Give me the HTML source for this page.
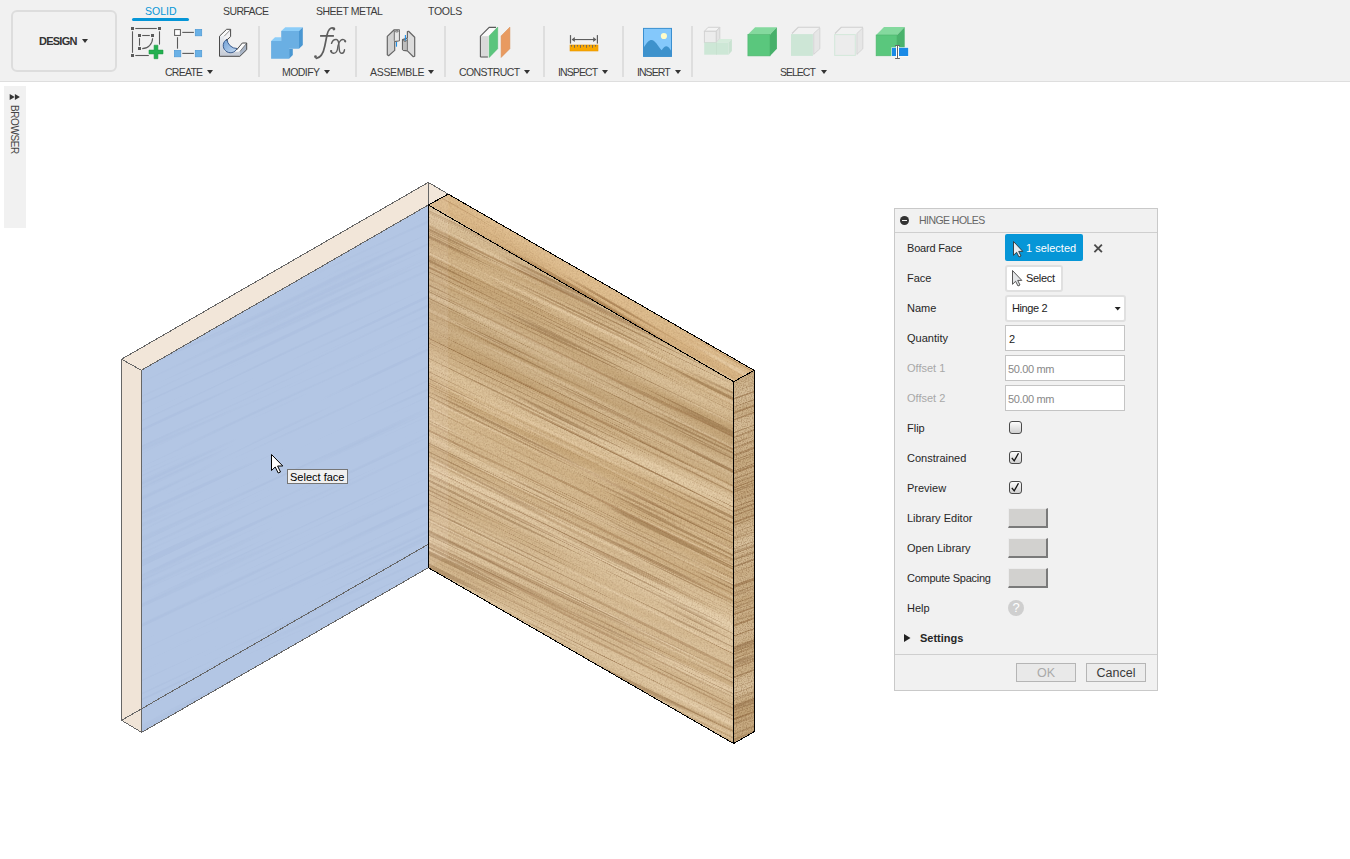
<!DOCTYPE html>
<html><head><meta charset="utf-8">
<style>
html,body{margin:0;padding:0;}
body{width:1350px;height:859px;overflow:hidden;background:#fff;position:relative;font-family:"Liberation Sans",sans-serif;color:#222;}
.abs{position:absolute;}
#tb{left:0;top:0;width:1350px;height:81px;background:#f1f1f1;border-bottom:1px solid #dedede;}
#design{left:11px;top:10px;width:102px;height:58px;border:2px solid #dddddd;border-radius:6px;}
.tab{position:absolute;top:4px;font-size:10.5px;line-height:14px;color:#3c3c3c;white-space:nowrap;letter-spacing:-0.3px;}
.glab{position:absolute;top:65px;font-size:10.5px;line-height:14px;color:#3c3c3c;white-space:nowrap;letter-spacing:-0.3px;}
.tri{position:absolute;width:0;height:0;border-left:3px solid transparent;border-right:3px solid transparent;border-top:4px solid #333;}
.sep{position:absolute;top:26px;width:2px;height:51px;background:#dedede;}
#browser{left:4px;top:86px;width:22px;height:142px;background:#f1f1f1;}
#panel{left:894px;top:208px;width:262px;height:481px;background:#f1f1f1;border:1px solid #c9c9c9;}
.lab{position:absolute;left:12px;font-size:11px;line-height:14px;color:#262626;white-space:nowrap;}
.inp{position:absolute;left:110px;width:118px;height:24px;background:#fff;border:1px solid #c4c4c4;}
.inp span{position:absolute;left:3px;top:6px;font-size:11px;line-height:14px;}
.chk{position:absolute;left:114px;width:11px;height:11px;border:1px solid #4a4a4a;border-radius:3px;background:linear-gradient(#fdfdfd,#cfcfcf);}
.bev{position:absolute;left:113px;width:38px;height:18px;background:#d2d1cf;border-top:1px solid #ececec;border-left:1px solid #ececec;border-right:2px solid #7a7a7a;border-bottom:2px solid #7a7a7a;box-sizing:border-box;width:40px;height:20px;}
</style></head>
<body>
<!-- toolbar -->
<div id="tb" class="abs"></div>
<div id="design" class="abs"></div>
<div class="abs" style="left:39px;top:34px;font-size:11px;font-weight:bold;line-height:14px;color:#333;letter-spacing:-0.76px;">DESIGN</div>
<div class="tri" style="left:82px;top:39px;"></div>

<div class="tab" style="left:145px;color:#0696d7;letter-spacing:0">SOLID</div>
<div class="abs" style="left:132px;top:18px;width:57px;height:3px;background:#0696d7;border-radius:2px;"></div>
<div class="tab" style="left:223px;letter-spacing:-0.6px">SURFACE</div>
<div class="tab" style="left:316px;letter-spacing:-0.5px">SHEET METAL</div>
<div class="tab" style="left:428px;">TOOLS</div>

<div class="glab" style="left:165px;letter-spacing:-0.75px">CREATE</div><div class="tri" style="left:207px;top:70px;"></div>
<div class="glab" style="left:282px;letter-spacing:-0.55px">MODIFY</div><div class="tri" style="left:324px;top:70px;"></div>
<div class="glab" style="left:370px;">ASSEMBLE</div><div class="tri" style="left:428px;top:70px;"></div>
<div class="glab" style="left:459px;letter-spacing:-0.6px">CONSTRUCT</div><div class="tri" style="left:524px;top:70px;"></div>
<div class="glab" style="left:558px;letter-spacing:-0.9px">INSPECT</div><div class="tri" style="left:602px;top:70px;"></div>
<div class="glab" style="left:637px;letter-spacing:-0.95px">INSERT</div><div class="tri" style="left:675px;top:70px;"></div>
<div class="glab" style="left:780px;letter-spacing:-1px">SELECT</div><div class="tri" style="left:821px;top:70px;"></div>

<div class="sep" style="left:258px;"></div>
<div class="sep" style="left:355px;"></div>
<div class="sep" style="left:444px;"></div>
<div class="sep" style="left:543px;"></div>
<div class="sep" style="left:622px;"></div>
<div class="sep" style="left:691px;"></div>

<!-- toolbar icons -->
<svg class="abs" style="left:0;top:0" width="930" height="82" viewBox="0 0 930 82">
  <!-- sketch -->
  <g fill="#5a5a5a">
    <rect x="131" y="27" width="3" height="3"/><rect x="158" y="27" width="3" height="3"/><rect x="131" y="54" width="3" height="3"/>
    <rect x="138" y="34" width="3" height="3"/><rect x="151" y="34" width="3" height="3"/><rect x="138" y="47" width="3" height="3"/>
  </g>
  <g stroke="#5a5a5a" stroke-width="1.1" fill="none">
    <line x1="135.3" y1="28.5" x2="156.8" y2="28.5"/>
    <line x1="132.5" y1="31.3" x2="132.5" y2="52.8"/>
    <line x1="159.5" y1="31.3" x2="159.5" y2="44.6"/>
    <line x1="135.3" y1="55.5" x2="148.8" y2="55.5"/>
    <line x1="142.2" y1="35.5" x2="149.8" y2="35.5"/>
    <line x1="139.5" y1="38.2" x2="139.5" y2="45.7"/>
    <path d="M152.6,38.2 A10.4,10.4 0 0 1 142.2,48.6"/>
  </g>
  <g fill="#22b04f" stroke="#1d9a43" stroke-width="0.6">
    <path d="M154.1,45.2 H157.9 V50.1 H163 V53.9 H157.9 V58.7 H154.1 V53.9 H149 V50.1 H154.1 Z"/>
  </g>
  <!-- rectangle -->
  <rect x="174.6" y="29.6" width="5.8" height="5.8" fill="#fff" stroke="#5a5a5a" stroke-width="1"/>
  <g fill="#6ab1e6" stroke="#4d9ad6" stroke-width="0.7">
    <rect x="195.3" y="29.4" width="6.4" height="6.4"/>
    <rect x="174.4" y="50.4" width="6.4" height="6.4"/>
    <rect x="195.3" y="50.4" width="6.4" height="6.4"/>
  </g>
  <g stroke="#5a5a5a" stroke-width="1.1">
    <line x1="182.3" y1="32.4" x2="193.9" y2="32.4"/>
    <line x1="177.5" y1="37.2" x2="177.5" y2="48.7"/>
    <line x1="182.3" y1="53.4" x2="193.9" y2="53.4"/>
  </g>
  <!-- fillet -->
  <defs>
    <linearGradient id="gfl" x1="0" y1="0" x2="0" y2="1"><stop offset="0" stop-color="#e9ecf1"/><stop offset="1" stop-color="#c4cad5"/></linearGradient>
    <linearGradient id="gbl" x1="0" y1="0" x2="1" y2="1"><stop offset="0" stop-color="#6f9fd6"/><stop offset="1" stop-color="#c7dbf1"/></linearGradient>
  </defs>
  <polygon points="219.5,36.2 226.6,29.3 230.6,29.3 224.2,36.2" fill="#fbfbfb"/>
  <polygon points="224.2,36.2 230.6,29.3 230.6,36.6 224.2,43.5" fill="#f2f2f4"/>
  <polygon points="219.5,36.2 224.2,36.2 224.2,51.5 239.9,51.5 239.9,56.3 219.5,56.3" fill="url(#gfl)"/>
  <polygon points="235.3,51.5 242.3,43 246.7,43 239.9,51.5" fill="#fbfbfb"/>
  <polygon points="239.9,51.5 246.7,43 246.7,49.7 239.9,56.3" fill="#a9b5c6"/>
  <path d="M227,39.2 A7.2,7.2 0 1 0 237,48.5 A10,10 0 0 1 227,39.2 Z" fill="url(#gbl)" stroke="#2b4f85" stroke-width="0.9"/>
  <g stroke="#4a4a4a" stroke-width="1" fill="none" stroke-linejoin="round">
    <path d="M219.5,56.3 V36.2 L226.6,29.3 H230.6 V36.6 L226.3,40.5"/>
    <path d="M219.5,56.3 H239.9 L246.7,49.7 V43 H242.3 L236.5,50"/>
    <path d="M224.2,36.2 L230.6,29.6" stroke-width="0.6"/>
    <path d="M239.9,51.5 L246.7,43.2" stroke-width="0.6"/>
  </g>
  <!-- extrude -->
  <g>
    <polygon points="281.2,31 285.3,27.3 302.8,27.3 299,31" fill="#8ccdf8"/>
    <polygon points="299,31 302.8,27.3 302.8,45 299,48.8" fill="#4a97d2"/>
    <polygon points="271.1,41 275,37.2 281.2,37.2 281.2,41" fill="#8ccdf8"/>
    <polygon points="289.1,48.8 292.8,48.8 292.8,55 289.1,58.7" fill="#4a97d2"/>
    <path d="M271.1,41 H281.2 V31 H299 V48.8 H289.1 V58.7 H271.1 Z" fill="#6aafe3"/>
  </g>
  <!-- fx -->
  <g fill="none" stroke="#5e5e5e" stroke-linecap="round">
    <path d="M334,28.4 C330.5,26.3 327.8,30.5 327,35 L324.8,46 C323.6,52 321,57.8 316.3,58.3" stroke-width="1.7"/>
    <path d="M331.5,43.4 C332.5,40.5 334.5,39.3 336.3,39.5 C338.3,39.8 338.6,42 338.8,44 L339.3,49.5 C339.6,52.5 340.8,53.4 342,53.3 C343.5,53.1 344.3,51 344.5,49.8" stroke-width="1.4"/>
    <path d="M345.3,41.5 C345,39.5 342.5,39 340.8,40.3 C339.3,41.5 338.5,43.5 338,46 L337.5,49 C337,52 335,53.3 333.3,53.2 C331.8,53.1 331,52 331,50.8" stroke-width="1.4"/>
  </g>
  <g fill="#5e5e5e"><circle cx="333.9" cy="29" r="1.4"/><circle cx="315.5" cy="56.7" r="1.4"/><circle cx="345.2" cy="41.3" r="1.1"/><circle cx="331.2" cy="51.2" r="1.1"/>
  <rect x="320.1" y="35" width="13.8" height="1.8"/></g>
  <!-- assemble -->
  <g stroke="#666" stroke-width="1.2" stroke-linejoin="round">
    <polygon points="387.3,36.4 394.2,29.8 399.3,29.8 399.3,40.6 394.7,41.6 394.7,50.4 388.6,55.7 387.3,54.8" fill="#d2d2d2"/>
    <polygon points="402.5,39.6 407.4,38.1 407.4,31.5 408.6,31.3 414.7,37.2 414.7,56.2 413.3,56.7 407.4,50.9 403.5,50.4 402.5,49.4" fill="#dcdcdc"/>
  </g>
  <rect x="394.6" y="30.5" width="4.2" height="10" fill="#e6e6e6"/>
  <rect x="403" y="40.5" width="4" height="9.5" fill="#bdbdbd"/>
  <g fill="none" stroke="#666" stroke-width="0.9">
    <ellipse cx="396.7" cy="31.3" rx="1.6" ry="0.7"/>
    <ellipse cx="405" cy="40.6" rx="1.6" ry="0.7"/>
    <line x1="394.3" y1="30.5" x2="394.3" y2="40.8"/>
    <line x1="407.4" y1="39" x2="407.4" y2="50.5"/>
  </g>
  <g stroke="#1e8fe8" stroke-width="1.1"><line x1="396.5" y1="42" x2="396.5" y2="46.7"/><line x1="405.4" y1="35.1" x2="405.4" y2="40.6"/></g>
  <!-- construct -->
  <polygon points="481,36.2 489.5,27.6 496,27.6 488,36.2" fill="#fafafa"/>
  <rect x="481.1" y="36.2" width="7" height="20.4" fill="#d9d9d9"/>
  <path d="M480.4,57 V36.2 L489.2,27.4 H496" fill="none" stroke="#5a5a5a" stroke-width="1.1"/>
  <path d="M480.4,57 H487.9" stroke="#5a5a5a" stroke-width="1.1"/>
  <polygon points="489.2,35.9 497.7,27.1 497.7,48.7 489.2,57.5" fill="#5bc57d" stroke="#4cb46d" stroke-width="0.5"/>
  <polygon points="501.1,35.9 509.9,27.1 509.9,48.7 501.1,57.5" fill="#e89a60" stroke="#d98a50" stroke-width="0.5"/>
  <!-- inspect -->
  <g fill="#5e5e5e">
    <rect x="569.9" y="35.1" width="1.2" height="8.5"/><rect x="596.8" y="35.1" width="1.2" height="8.5"/>
    <rect x="572" y="39" width="24" height="1.1"/>
    <polygon points="571.6,39.5 574.8,37.1 574.8,41.9"/><polygon points="596.4,39.5 593.2,37.1 593.2,41.9"/>
  </g>
  <rect x="570" y="45" width="28" height="6" fill="#f8a700" stroke="#e69500" stroke-width="0.6"/>
  <g fill="#666">
    <rect x="571" y="45" width="0.9" height="1.6"/><rect x="574" y="45" width="0.9" height="2.8"/><rect x="577" y="45" width="0.9" height="1.6"/>
    <rect x="580" y="45" width="0.9" height="2.8"/><rect x="583" y="45" width="0.9" height="1.6"/><rect x="586" y="45" width="0.9" height="2.8"/>
    <rect x="589" y="45" width="0.9" height="1.6"/><rect x="592" y="45" width="0.9" height="2.8"/><rect x="595" y="45" width="0.9" height="1.6"/>
  </g>
  <!-- insert -->
  <rect x="643.5" y="28.4" width="28" height="28" fill="#84c8fb" stroke="#3a8fd0" stroke-width="1"/>
  <path d="M644,47.1 C647,42 649,39.9 651.5,39.9 C655,39.9 658,46 661.7,50.2 C663,48 664.5,46.2 666.4,46.2 C668.5,46.2 670,49 671,50.6 V56.4 H644 Z" fill="#3e92cc"/>
  <circle cx="663.9" cy="36" r="3.1" fill="#fffcc8"/>
  <!-- select 1 -->
  <g stroke="#d2d2d2" stroke-width="1">
    <polygon points="704.4,31.3 708.1,27.3 719.8,27.3 716.2,31.3" fill="#f4f4f4"/>
    <polygon points="716.2,31.3 719.8,27.3 719.8,38.8 716.2,42.5" fill="#e4e4e4"/>
    <rect x="704.4" y="31.3" width="11.8" height="11.2" fill="#ececec"/>
  </g>
  <polygon points="716.2,42.5 719.8,39.1 731.9,39.1 728.6,42.5" fill="#d6ecdc"/>
  <polygon points="728.6,42.5 731.9,39.1 731.9,50.9 728.6,54.7" fill="#c9e2d1"/>
  <rect x="704.2" y="42.5" width="24.4" height="12.2" fill="#cde7d6"/>
  <line x1="716.5" y1="42.5" x2="716.5" y2="54.7" stroke="#c3ddcb" stroke-width="0.6"/>
  <!-- select 2 -->
  <polygon points="747.9,34.4 755.1,27.3 776.9,27.3 770,34.4" fill="#84d99e"/>
  <polygon points="770,34.4 776.9,27.3 776.9,48.8 770,55.9" fill="#47b06a"/>
  <rect x="747.9" y="34.4" width="22.1" height="21.5" fill="#5ac77d" stroke="#4cb46d" stroke-width="0.6"/>
  <!-- select 3 -->
  <path d="M792,33.5 L798.2,27.3 H820" fill="none" stroke="#d0d0d0" stroke-width="1.1"/>
  <polygon points="813.7,33.5 819.8,27.9 819.8,48.8 813.7,54.4" fill="#e6e6e6" stroke="#d0d0d0" stroke-width="0.8"/>
  <rect x="791" y="34.1" width="21.9" height="21.8" fill="#cde6d6"/>
  <!-- select 4 -->
  <path d="M835,33.5 L841.2,27.3 H863" fill="none" stroke="#d0d0d0" stroke-width="1.1"/>
  <polygon points="856.9,33.5 862.8,27.9 862.8,48.8 856.9,54.4" fill="#e6e6e6" stroke="#d0d0d0" stroke-width="0.8"/>
  <rect x="834.7" y="34.6" width="20.6" height="20.8" fill="#ececec" stroke="#d3e8da" stroke-width="1"/>
  <!-- select 5 -->
  <polygon points="876.1,35 884,27.1 904.7,27.1 897,35" fill="#84d99e"/>
  <polygon points="897,35 904.7,27.1 904.7,48 897,55" fill="#4ab26c"/>
  <rect x="876.1" y="35" width="20.9" height="20.8" fill="#5ac77d" stroke="#4cb46d" stroke-width="0.6"/>
  <rect x="891.4" y="47.3" width="17.3" height="9.2" fill="#fff"/>
  <rect x="891.9" y="47.8" width="16.3" height="8.2" fill="#1a8ae6"/>
  <rect x="896" y="45" width="3" height="14" fill="#fff"/>
  <g stroke="#666" stroke-width="1"><line x1="897.5" y1="45.5" x2="897.5" y2="58.5"/><line x1="895.1" y1="45.5" x2="899.9" y2="45.5"/><line x1="895.1" y1="58.5" x2="899.9" y2="58.5"/></g>
</svg>

<!-- browser strip -->
<div id="browser" class="abs"></div>
<svg class="abs" style="left:0;top:84px" width="30" height="80"><polygon points="9.7,9.9 14.7,12.9 9.7,15.9" fill="#333"/><polygon points="14.9,9.9 19.9,12.9 14.9,15.9" fill="#333"/></svg>
<div class="abs" style="left:18.5px;top:105px;transform-origin:0 0;transform:rotate(90deg);font-size:10px;line-height:10px;color:#444;letter-spacing:-0.4px;white-space:nowrap;">BROWSER</div>

<!-- 3D model -->
<svg class="abs" style="left:0;top:0" width="1350" height="859" viewBox="0 0 1350 859">
  <!-- left board -->
  <polygon points="121.5,359.2 428.3,182.4 448.2,194.1 428.3,205 141.4,370.3" fill="#f2e6d9"/>
  <polygon points="121.5,359.2 141.4,370.3 141.7,732.4 121.5,720.3" fill="#f0e4d7"/>
  <polygon points="141.4,370.3 428.3,205 428.3,567.7 141.7,732.4" fill="#b3c6e4"/>
  <g clip-path="url(#cb)"><g transform="rotate(-25 285 470)"><rect x="40" y="200" width="500" height="540" filter="url(#bgrain)" opacity="0.18"/></g></g>
  <!-- wood -->
  <defs>
    <clipPath id="cf"><polygon points="428.3,205 733.6,381.7 733.6,743.5 428.3,567.7"/></clipPath>
    <clipPath id="ct"><polygon points="428.3,205 448.2,194.1 754.2,370.4 733.6,381.7"/></clipPath>
    <clipPath id="cr"><polygon points="733.6,381.7 754.2,370.4 754.5,731.5 733.6,743.5"/></clipPath>
    <linearGradient id="band" gradientUnits="userSpaceOnUse" x1="0" y1="100" x2="0" y2="860">
      <stop offset="0" stop-color="#fff" stop-opacity="0.12"/>
      <stop offset="0.26" stop-color="#fff" stop-opacity="0.1"/>
      <stop offset="0.31" stop-color="#7a5a30" stop-opacity="0.0"/>
      <stop offset="0.38" stop-color="#7a5a30" stop-opacity="0.14"/>
      <stop offset="0.46" stop-color="#7a5a30" stop-opacity="0.0"/>
      <stop offset="0.6" stop-color="#fff" stop-opacity="0.08"/>
      <stop offset="1" stop-color="#fff" stop-opacity="0.06"/>
    </linearGradient>
    <filter id="wood" x="0" y="0" width="1" height="1" primitiveUnits="userSpaceOnUse" color-interpolation-filters="sRGB">
      <feTurbulence type="fractalNoise" baseFrequency="0.0018 0.04" numOctaves="3" seed="7" result="n"/>
      <feColorMatrix in="n" type="matrix" values="0.2 0 0 0 0.74  0.26 0 0 0 0.6  0.32 0 0 0 0.405  0 0 0 0 1"/>
    </filter>
    <filter id="grain" x="0" y="0" width="1" height="1" primitiveUnits="userSpaceOnUse" color-interpolation-filters="sRGB">
      <feTurbulence type="fractalNoise" baseFrequency="0.0025 0.3" numOctaves="3" seed="11" result="n"/>
      <feColorMatrix in="n" type="matrix" values="0 0 0 0 0.5  0 0 0 0 0.32  0 0 0 0 0.15  -8 0 0 0 3.2"/>
    </filter>
    <filter id="grain2" x="0" y="0" width="1" height="1" primitiveUnits="userSpaceOnUse" color-interpolation-filters="sRGB">
      <feTurbulence type="fractalNoise" baseFrequency="0.005 0.5" numOctaves="2" seed="23" result="n"/>
      <feColorMatrix in="n" type="matrix" values="0 0 0 0 0.5  0 0 0 0 0.34  0 0 0 0 0.18  -8 0 0 0 3.45"/>
    </filter>
    <filter id="light" x="0" y="0" width="1" height="1" primitiveUnits="userSpaceOnUse" color-interpolation-filters="sRGB">
      <feTurbulence type="fractalNoise" baseFrequency="0.003 0.22" numOctaves="2" seed="5" result="n"/>
      <feColorMatrix in="n" type="matrix" values="0 0 0 0 0.93  0 0 0 0 0.84  0 0 0 0 0.7  9 0 0 0 -5.2"/>
    </filter>
    <filter id="bgrain" x="0" y="0" width="1" height="1" primitiveUnits="userSpaceOnUse" color-interpolation-filters="sRGB">
      <feTurbulence type="fractalNoise" baseFrequency="0.004 0.25" numOctaves="2" seed="31" result="n"/>
      <feColorMatrix in="n" type="matrix" values="0 0 0 0 0.6  0 0 0 0 0.68  0 0 0 0 0.82  -6 0 0 0 2.7"/>
    </filter>
    <clipPath id="cb"><polygon points="141.4,370.3 428.3,205 428.3,567.7 141.7,732.4"/></clipPath>
    <filter id="speck" x="0" y="0" width="1" height="1" primitiveUnits="userSpaceOnUse" color-interpolation-filters="sRGB">
      <feTurbulence type="fractalNoise" baseFrequency="0.8" numOctaves="1" seed="3" result="n"/>
      <feColorMatrix in="n" type="matrix" values="0 0 0 0 0.45  0 0 0 0 0.3  0 0 0 0 0.15  -3 0 0 0 1.7"/>
    </filter>
  </defs>
  <g clip-path="url(#cf)">
    <g transform="rotate(26 580 475)">
      <rect x="250" y="100" width="660" height="760" filter="url(#wood)"/>
      <rect x="250" y="100" width="660" height="760" filter="url(#grain)" opacity="0.3"/>
      <rect x="250" y="100" width="660" height="760" filter="url(#light)" opacity="0.5"/>
      <rect x="250" y="100" width="660" height="760" filter="url(#grain2)" opacity="0.4"/>
      <rect x="250" y="100" width="660" height="760" filter="url(#speck)" opacity="0.25"/>
      <rect x="250" y="100" width="660" height="760" fill="url(#band)"/>
    </g>
  </g>
  <g clip-path="url(#ct)">
    <g transform="rotate(30 590 285)">
      <rect x="380" y="240" width="420" height="90" filter="url(#wood)"/>
      <rect x="380" y="240" width="420" height="90" fill="#f2c48a" opacity="0.3"/>
      <rect x="380" y="240" width="420" height="90" filter="url(#light)" opacity="0.6"/>
      <rect x="380" y="240" width="420" height="90" filter="url(#grain)" opacity="0.45"/>
      <rect x="380" y="240" width="420" height="90" filter="url(#speck)" opacity="0.2"/>
    </g>
  </g>
  <g clip-path="url(#cr)">
    <g transform="rotate(-20 744 556)">
      <rect x="640" y="330" width="210" height="450" filter="url(#wood)"/>
      <rect x="640" y="330" width="210" height="450" filter="url(#grain)" opacity="0.5"/>
      <rect x="640" y="330" width="210" height="450" filter="url(#grain2)" opacity="0.5"/>
    </g>
    <rect x="725" y="360" width="40" height="400" fill="#b09878" opacity="0.25"/>
    <rect x="725" y="360" width="40" height="400" filter="url(#speck)" opacity="0.35"/>
  </g>
  <polygon points="428.3,205 448.2,194.1 448.2,556 428.3,567.7" fill="#f3e6da" opacity="0.1"/>
  <g stroke="#666" stroke-width="1" fill="none" shape-rendering="crispEdges">
    <polyline points="141.4,370.3 121.5,359.2 428.3,182.4 448.2,194.1"/>
    <line x1="141.4" y1="370.3" x2="428.3" y2="205"/>
    <line x1="121.5" y1="359.2" x2="121.5" y2="720.3"/>
    <line x1="141.5" y1="370.3" x2="141.5" y2="732.4"/>
    <polyline points="121.5,720.3 141.7,732.4 428.3,567.7"/>
    <line x1="121.5" y1="720.3" x2="428.3" y2="544.3"/>
    <line x1="428.3" y1="182.4" x2="428.3" y2="205"/>
  </g>
  <g stroke="#000" stroke-width="1" fill="none" stroke-linejoin="miter" shape-rendering="crispEdges">
    <polygon points="428.3,205 448.2,194.1 754.2,370.4 733.6,381.7"/>
    <polygon points="428.3,205 733.6,381.7 733.6,743.5 428.3,567.7"/>
    <polyline points="754.2,370.4 754.5,731.5 733.6,743.5"/>
  </g>
</svg>

<!-- cursor + tooltip -->
<svg class="abs" style="left:0;top:0" width="400" height="500"><path d="M271.5,454.5 L271.5,470.5 L275.2,467 L278.2,473 L280.5,472 L277.6,466 L282.8,466 Z" fill="#fff" stroke="#000" stroke-width="1" stroke-linejoin="miter"/></svg>
<div class="abs" style="left:287px;top:469px;width:59px;height:13px;background:#f0f0f0;border:1px solid #767676;"></div>
<div class="abs" style="left:290px;top:471px;font-size:11px;line-height:13px;color:#000;">Select face</div>

<!-- panel -->
<div id="panel" class="abs">
  <div class="abs" style="left:0;top:0;width:262px;height:23px;border-bottom:1px solid #cfcfcf;"></div>
  <div class="abs" style="left:5px;top:7px;width:9px;height:9px;border-radius:50%;background:#333;"></div>
  <div class="abs" style="left:7px;top:11px;width:5px;height:1px;background:#f1f1f1;"></div>
  <div class="abs" style="left:24px;top:4px;font-size:10.5px;line-height:14px;color:#666;letter-spacing:-0.55px">HINGE HOLES</div>

  <div class="lab" style="top:32px;letter-spacing:-0.2px">Board Face</div>
  <div class="lab" style="top:62px;">Face</div>
  <div class="lab" style="top:92px;">Name</div>
  <div class="lab" style="top:122px;">Quantity</div>
  <div class="lab" style="top:152px;color:#a8a8a8;">Offset 1</div>
  <div class="lab" style="top:182px;color:#a8a8a8;">Offset 2</div>
  <div class="lab" style="top:212px;">Flip</div>
  <div class="lab" style="top:242px;">Constrained</div>
  <div class="lab" style="top:272px;">Preview</div>
  <div class="lab" style="top:302px;">Library Editor</div>
  <div class="lab" style="top:332px;">Open Library</div>
  <div class="lab" style="top:362px;letter-spacing:-0.25px">Compute Spacing</div>
  <div class="lab" style="top:392px;">Help</div>
  <div class="lab" style="left:25px;top:422px;font-weight:bold;">Settings</div>

  <div class="abs" style="left:109.5px;top:25.3px;width:78px;height:27px;background:#0696d7;border-radius:2px;"></div>
  <div class="abs" style="left:131px;top:32px;font-size:11px;line-height:14px;color:#fff;">1 selected</div>
  <div class="abs" style="left:109.5px;top:55.5px;width:54px;height:23px;background:#fff;border:2px solid #e0e0e0;border-radius:3px;"></div>
  <div class="abs" style="left:131px;top:62px;font-size:11px;line-height:14px;color:#222;letter-spacing:-0.3px">Select</div>
  <div class="abs" style="left:109.5px;top:85.5px;width:117px;height:23px;background:#fff;border:2px solid #e0e0e0;border-radius:3px;"></div>
  <div class="abs" style="left:117px;top:92px;font-size:11px;line-height:14px;color:#222;letter-spacing:-0.4px">Hinge 2</div>
  <div class="inp" style="top:116px;"><span>2</span></div>
  <div class="inp" style="top:146px;"><span style="color:#888;left:2px;letter-spacing:-0.35px">50.00 mm</span></div>
  <div class="inp" style="top:176px;"><span style="color:#888;left:2px;letter-spacing:-0.35px">50.00 mm</span></div>
  <div class="chk" style="top:212px;"></div>
  <div class="chk" style="top:242px;"></div>
  <div class="chk" style="top:272px;"></div>
  <div class="bev" style="top:299px;"></div>
  <div class="bev" style="top:329px;"></div>
  <div class="bev" style="top:359px;"></div>
  <div class="abs" style="left:113px;top:391px;width:16px;height:16px;border-radius:50%;background:#cfcfcf;color:#fff;font-size:13px;font-weight:normal;line-height:16px;text-align:center;">?</div>


  <svg class="abs" style="left:0;top:0" width="262" height="481">
    <!-- cursor in blue button -->
    <path d="M118.5,32.5 L118.5,46.3 L121.6,43.3 L124,48 L126,47 L123.7,42.4 L127.8,42.4 Z" fill="#e9eef3" stroke="#333" stroke-width="0.9" stroke-linejoin="round"/>
    <!-- X -->
    <g stroke="#4a4a4a" stroke-width="1.8" stroke-linecap="butt"><line x1="199.4" y1="35.6" x2="206.9" y2="43.1"/><line x1="206.9" y1="35.6" x2="199.4" y2="43.1"/></g>
    <!-- cursor in select button -->
    <path d="M117.5,61.5 L117.5,75.3 L120.6,72.3 L123,77 L125,76 L122.7,71.4 L126.8,71.4 Z" fill="#e4e6e8" stroke="#444" stroke-width="0.9" stroke-linejoin="round"/>
    <!-- dropdown tri -->
    <polygon points="219.7,98 225.7,98 222.7,101.6" fill="#222"/>
    <!-- checkmarks -->
    <path d="M116.8,248.8 L119.2,251.8 L123.5,244.2" fill="none" stroke="#111" stroke-width="1.3"/>
    <path d="M116.8,278.8 L119.2,281.8 L123.5,274.2" fill="none" stroke="#111" stroke-width="1.3"/>
    <!-- settings tri -->
    <polygon points="9,425 15.5,429 9,433" fill="#222"/>
  </svg>
  <div class="abs" style="left:0;top:445px;width:262px;height:1px;background:#cfcfcf;"></div>
  <div class="abs" style="left:121px;top:454px;width:58px;height:17px;background:#e9e9e9;border:1px solid #b5b5b5;"></div>
  <div class="abs" style="left:121px;top:457px;width:60px;text-align:center;font-size:12.5px;line-height:14px;color:#aaa;">OK</div>
  <div class="abs" style="left:191px;top:454px;width:58px;height:17px;background:#ececec;border:1px solid #b5b5b5;"></div>
  <div class="abs" style="left:191px;top:457px;width:60px;text-align:center;font-size:12.5px;line-height:14px;color:#3a3a3a;">Cancel</div>
</div>
</body></html>
